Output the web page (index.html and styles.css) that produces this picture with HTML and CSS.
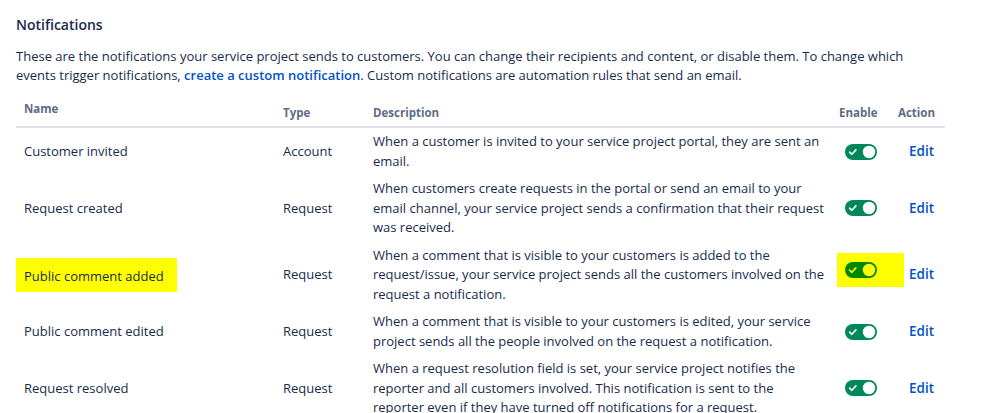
FILE: index.html
```html
<!DOCTYPE html>
<html lang="en">
<head>
  <meta charset="UTF-8" />
  <meta name="viewport" content="width=device-width, initial-scale=1.0" />
  <title>Notifications</title>
  <link rel="stylesheet" href="styles.css">
</head>
<body>
  <div class="page">
    <h2 class="page-title">Notifications</h2>
    <p class="intro">These are the notifications your service project sends to customers. You can change their recipients and content, or disable them. To change which events trigger notifications, <a href="#" class="link">create a custom notification</a>. Custom notifications are automation rules that send an email.</p>

    <table class="notify-table">
      <colgroup>
        <col class="w-name">
        <col class="w-type">
        <col class="w-desc">
        <col class="w-enable">
        <col class="w-action">
      </colgroup>
      <thead>
        <tr>
          <th><span class="sort-label">Name</span></th>
          <th>Type</th>
          <th>Description</th>
          <th>Enable</th>
          <th>Action</th>
        </tr>
      </thead>
      <tbody id="rows"></tbody>
    </table>
  </div>

  <script>
    const notifications = [
      { name: "Customer invited", type: "Account", desc: "When a customer is invited to your service project portal, they are sent an email." },
      { name: "Request created", type: "Request", desc: "When customers create requests in the portal or send an email to your email channel, your service project sends a confirmation that their request was received." },
      { name: "Public comment added", type: "Request", desc: "When a comment that is visible to your customers is added to the request/issue, your service project sends all the customers involved on the request a notification.", marked: true },
      { name: "Public comment edited", type: "Request", desc: "When a comment that is visible to your customers is edited, your service project sends all the people involved on the request a notification." },
      { name: "Request resolved", type: "Request", desc: "When a request resolution field is set, your service project notifies the reporter and all customers involved. This notification is sent to the reporter even if they have turned off notifications for a request." }
    ];

    function toggleSvg(marked) {
      return `<svg class="toggle ${marked ? "toggle-marked" : ""}" width="32" height="16" viewBox="0 0 32 16">
        <rect class="track" width="32" height="16" rx="8"/>
        <path class="check" d="M4.6 8.1l2.3 2.2 4-4.4"/>
        <circle class="knob" cx="24" cy="8" r="6.2"/>
      </svg>`;
    }

    const rows = document.getElementById("rows");
    notifications.forEach(n => {
      const name = n.marked ? `<span class="marker marker-name">${n.name}</span>` : n.name;
      const toggle = n.marked ? `<span class="marker marker-toggle">${toggleSvg(true)}</span>` : toggleSvg(false);
      rows.innerHTML += `
        <tr>
          <td class="cell-name">${name}</td>
          <td class="cell-type">${n.type}</td>
          <td class="cell-desc">${n.desc}</td>
          <td class="cell-enable">${toggle}</td>
          <td class="cell-action"><a href="#" class="edit-link">Edit</a></td>
        </tr>`;
    });
  </script>
</body>
</html>
```

FILE: styles.css
```css
* {
  box-sizing: border-box;
}
body {
  margin: 0;
  background: #fff;
  color: #172b4d;
  font-family: "Open Sans", "Noto Sans", sans-serif;
  font-size: 13px;
}
.page {
  padding: 15px 54px 0 16px;
}
.page-title {
  margin: 0;
  font-size: 14px;
  font-weight: 600;
  line-height: 20px;
}
.intro {
  margin: 11.5px 0 0;
  line-height: 19.5px;
}
.link {
  color: #0052cc;
  font-weight: 600;
  text-decoration: none;
}
.notify-table {
  width: 929px;
  margin-top: 10.5px;
  border-collapse: collapse;
  table-layout: fixed;
}
.w-name { width: 259px; }
.w-type { width: 90px; }
.w-desc { width: 466px; }
.w-enable { width: 59px; }
.w-action { width: 55px; }

.notify-table th {
  padding: 5px 8px;
  border-bottom: 2px solid #dfe1e6;
  color: #5e6c84;
  font-size: 11.5px;
  font-weight: 700;
  line-height: 16px;
  text-align: left;
  vertical-align: bottom;
}
.sort-label {
  display: inline-block;
  padding-bottom: 4px;
}
.notify-table td {
  padding: 4px 8px;
  line-height: 19.5px;
  vertical-align: middle;
}
.notify-table td.cell-desc {
  padding-right: 6px;
}
.notify-table td.cell-enable {
  padding-left: 14px;
  padding-right: 0;
  font-size: 0;
}
.notify-table td.cell-action {
  padding-left: 19px;
  padding-right: 0;
}
.edit-link {
  color: #0052cc;
  font-weight: 600;
  font-size: 13.5px;
  text-decoration: none;
}
.toggle {
  display: block;
}
.toggle .track {
  fill: #00875a;
}
.toggle .knob {
  fill: #fff;
}
.toggle .check {
  fill: none;
  stroke: #fff;
  stroke-width: 1.6;
  stroke-linecap: round;
  stroke-linejoin: round;
}
.toggle-marked .track {
  fill: #008700;
}
.toggle-marked .knob {
  fill: #ffff00;
}
.toggle-marked .check {
  stroke: #ffff00;
}
.marker {
  display: inline-block;
  background: #ffff00;
}
.marker-name {
  margin-left: -8px;
  padding: 9px 13px 5px 8px;
}
.marker-toggle {
  margin: 0 -27px 0 -8px;
  padding: 9px 27px 9px 8px;
}
```
